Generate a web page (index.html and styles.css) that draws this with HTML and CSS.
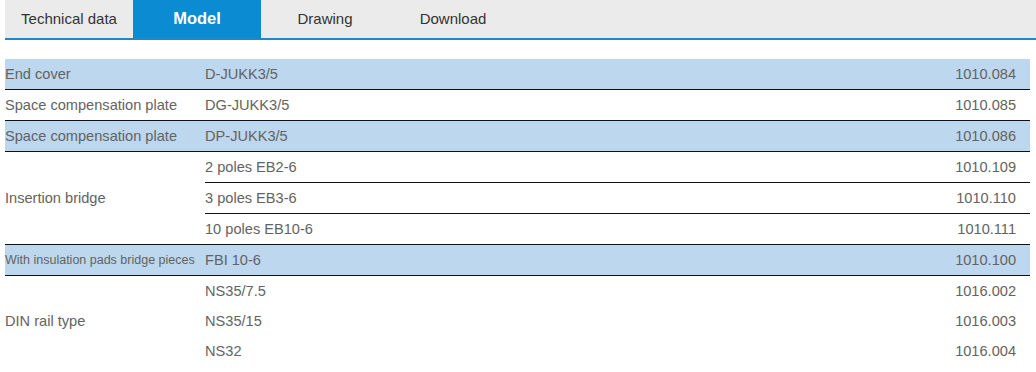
FILE: index.html
```html
<!DOCTYPE html>
<html>
<head>
<meta charset="utf-8">
<link rel="stylesheet" href="styles.css">
</head>
<body>
<div class="page">
  <div class="tabs">
    <div class="tab">Technical data</div>
    <div class="tab active">Model</div>
    <div class="tab">Drawing</div>
    <div class="tab">Download</div>
  </div>
  <table class="models">
    <colgroup><col class="c1"><col class="c2"><col class="c3"></colgroup>
    <tbody>
      <tr class="hl line"><td>End cover</td><td>D-JUKK3/5</td><td class="num">1010.084</td></tr>
      <tr class="line"><td>Space compensation plate</td><td>DG-JUKK3/5</td><td class="num">1010.085</td></tr>
      <tr class="hl line"><td>Space compensation plate</td><td>DP-JUKK3/5</td><td class="num">1010.086</td></tr>
      <tr class="line"><td rowspan="3" class="group">Insertion bridge</td><td>2 poles EB2-6</td><td class="num">1010.109</td></tr>
      <tr class="line"><td>3 poles EB3-6</td><td class="num">1010.110</td></tr>
      <tr class="line"><td>10 poles EB10-6</td><td class="num">1010.111</td></tr>
      <tr class="hl line"><td class="small">With insulation pads bridge pieces</td><td>FBI 10-6</td><td class="num">1010.100</td></tr>
      <tr><td rowspan="3">DIN rail type</td><td>NS35/7.5</td><td class="num">1016.002</td></tr>
      <tr><td>NS35/15</td><td class="num">1016.003</td></tr>
      <tr><td>NS32</td><td class="num">1016.004</td></tr>
    </tbody>
  </table>
</div>
</body>
</html>
```

FILE: styles.css
```css
html, body {
  margin: 0;
  padding: 0;
  background: #ffffff;
}

.page {
  padding-left: 5px;
  font-family: "Liberation Sans", Arial, sans-serif;
}

.tabs {
  display: flex;
  height: 38px;
  background: #ebebeb;
  border-bottom: 2px solid #2088c4;
}

.tab {
  width: 128px;
  display: flex;
  align-items: center;
  justify-content: center;
  font-size: 15px;
  color: #333333;
  padding-bottom: 1px;
  box-sizing: border-box;
}

.tab.active {
  background: #0a8bd2;
  color: #ffffff;
  font-weight: bold;
  font-size: 16.5px;
}

.models {
  margin-top: 19px;
  width: 1025px;
  border-collapse: collapse;
  table-layout: fixed;
  font-size: 14.6px;
  color: #636363;
}

.c1 { width: 200px; }
.c2 { width: 400px; }

.models td {
  height: 30px;
  padding: 0;
  vertical-align: middle;
  white-space: nowrap;
}

.models tr.line td {
  border-bottom: 1px solid #111111;
}

.models tr.hl td {
  background: #bdd7ee;
}

.models td.num {
  text-align: right;
  padding-right: 14px;
}

.models td.group {
  border-bottom: 1px solid #111111;
}

.models td.small {
  font-size: 12.5px;
}
```
